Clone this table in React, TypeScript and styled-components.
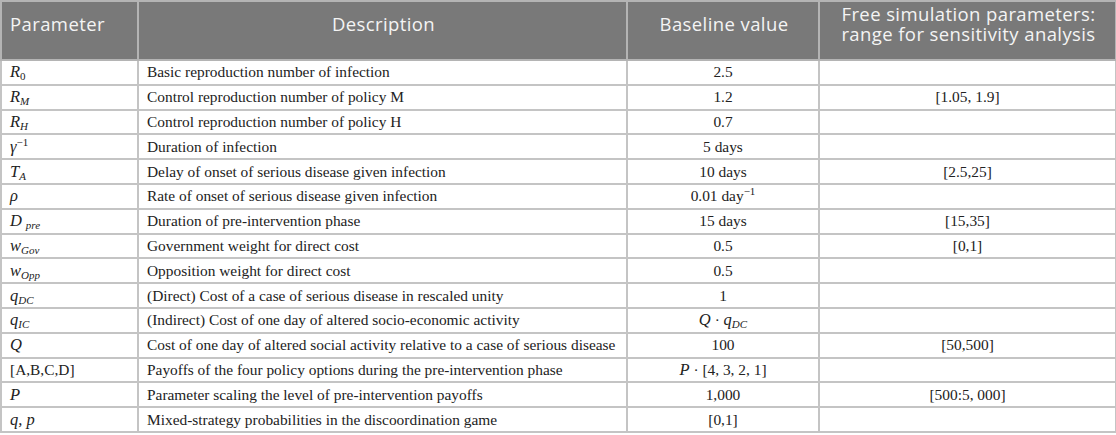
import React from "react";
import styled, { createGlobalStyle } from "styled-components";

const Global = createGlobalStyle`
  html, body { margin: 0; padding: 0; background: #fff; }
  #root { width: 1116px; }
`;

const Table = styled.table`
  width: 1115px;
  border-collapse: collapse;
  table-layout: fixed;
  border: 2px solid #b4b4b4;
`;

const HeadCell = styled.th<{ $align?: string }>`
  background: #797979;
  color: #f4f4f4;
  font-family: "Open Sans", "Noto Sans", sans-serif;
  font-weight: 400;
  font-size: 18.5px;
  letter-spacing: 0.4px;
  line-height: 20px;
  height: 59px;
  box-sizing: border-box;
  padding: 0 6px 13px 8px;
  text-align: ${(p) => p.$align || "center"};
  vertical-align: middle;
  border: 2px solid #b4b4b4;
  white-space: nowrap;
`;

const Row = styled.tr`
  height: 24.8px;
`;

const Cell = styled.td<{ $align?: string }>`
  font-family: "Liberation Serif", "Times New Roman", serif;
  font-size: 15.4px;
  color: #222;
  padding: 0 8px;
  line-height: 18px;
  text-align: ${(p) => p.$align || "left"};
  vertical-align: middle;
  border: 2px solid #c4c4c4;
  white-space: nowrap;
`;

const Sym = styled.i`
  font-style: italic;
  font-size: 16.5px;
`;

const Sub = styled.sub<{ $it?: boolean }>`
  font-size: 11px;
  font-style: ${(p) => (p.$it ? "italic" : "normal")};
  vertical-align: -3px;
  line-height: 0;
`;

const Sup = styled.sup`
  font-size: 11px;
  vertical-align: 6px;
  line-height: 0;
`;

type R = { sym: React.ReactNode; desc: string; base: React.ReactNode; range?: string };

const rows: R[] = [
  { sym: <><Sym>R</Sym><Sub>0</Sub></>, desc: "Basic reproduction number of infection", base: "2.5" },
  { sym: <><Sym>R</Sym><Sub $it>M</Sub></>, desc: "Control reproduction number of policy M", base: "1.2", range: "[1.05, 1.9]" },
  { sym: <><Sym>R</Sym><Sub $it>H</Sub></>, desc: "Control reproduction number of policy H", base: "0.7" },
  { sym: <><Sym>γ</Sym><Sup>−1</Sup></>, desc: "Duration of infection", base: "5 days" },
  { sym: <><Sym>T</Sym><Sub $it>A</Sub></>, desc: "Delay of onset of serious disease given infection", base: "10 days", range: "[2.5,25]" },
  { sym: <Sym>ρ</Sym>, desc: "Rate of onset of serious disease given infection", base: <>0.01 day<Sup>−1</Sup></> },
  { sym: <><Sym>D</Sym> <Sub $it>pre</Sub></>, desc: "Duration of pre-intervention phase", base: "15 days", range: "[15,35]" },
  { sym: <><Sym>w</Sym><Sub $it>Gov</Sub></>, desc: "Government weight for direct cost", base: "0.5", range: "[0,1]" },
  { sym: <><Sym>w</Sym><Sub $it>Opp</Sub></>, desc: "Opposition weight for direct cost", base: "0.5" },
  { sym: <><Sym>q</Sym><Sub $it>DC</Sub></>, desc: "(Direct) Cost of a case of serious disease in rescaled unity", base: "1" },
  { sym: <><Sym>q</Sym><Sub $it>IC</Sub></>, desc: "(Indirect) Cost of one day of altered socio-economic activity", base: <><Sym>Q</Sym> · <Sym>q</Sym><Sub $it>DC</Sub></> },
  { sym: <Sym>Q</Sym>, desc: "Cost of one day of altered social activity relative to a case of serious disease", base: "100", range: "[50,500]" },
  { sym: "[A,B,C,D]", desc: "Payoffs of the four policy options during the pre-intervention phase", base: <><Sym>P</Sym> · [4, 3, 2, 1]</> },
  { sym: <Sym>P</Sym>, desc: "Parameter scaling the level of pre-intervention payoffs", base: "1,000", range: "[500:5, 000]" },
  { sym: <Sym>q, p</Sym>, desc: "Mixed-strategy probabilities in the discoordination game", base: "[0,1]" },
];

export default function App() {
  return (
    <>
      <Global />
      <Table>
        <colgroup>
          <col style={{ width: 137 }} />
          <col style={{ width: 489 }} />
          <col style={{ width: 192 }} />
          <col style={{ width: 297 }} />
        </colgroup>
        <thead>
          <tr>
            <HeadCell $align="left">Parameter</HeadCell>
            <HeadCell>Description</HeadCell>
            <HeadCell>Baseline value</HeadCell>
            <HeadCell>
              Free simulation parameters:
              <br />
              range for sensitivity analysis
            </HeadCell>
          </tr>
        </thead>
        <tbody>
          {rows.map((r, i) => (
            <Row key={i}>
              <Cell>{r.sym}</Cell>
              <Cell>{r.desc}</Cell>
              <Cell $align="center">{r.base}</Cell>
              <Cell $align="center">{r.range || ""}</Cell>
            </Row>
          ))}
        </tbody>
      </Table>
    </>
  );
}
